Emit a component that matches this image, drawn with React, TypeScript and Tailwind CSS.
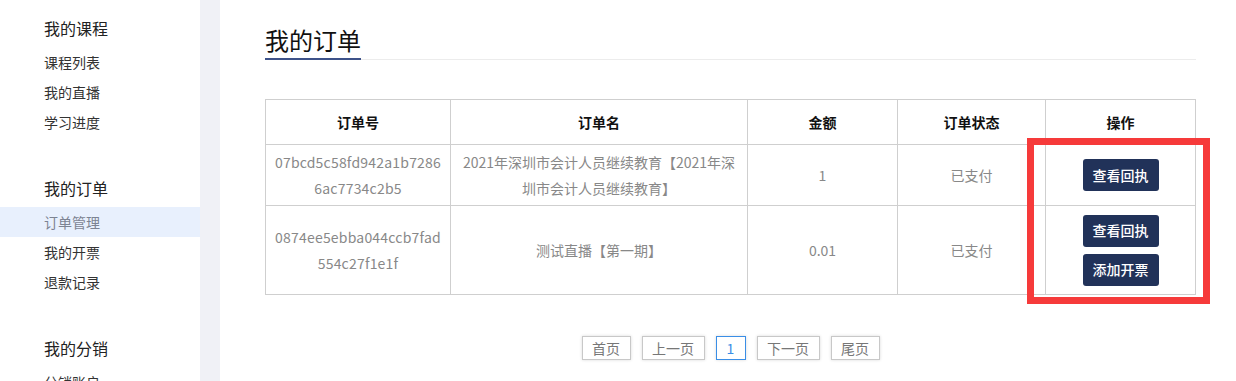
const font = "font-['Microsoft_YaHei','Noto_Sans_CJK_SC',sans-serif]";

const menu = [
  { title: "我的课程", items: ["课程列表", "我的直播", "学习进度"] },
  { title: "我的订单", items: ["订单管理", "我的开票", "退款记录"] },
  { title: "我的分销", items: ["分销账户"] },
];

const orders = [
  {
    no: ["07bcd5c58fd942a1b7286", "6ac7734c2b5"],
    name: "2021年深圳市会计人员继续教育【2021年深圳市会计人员继续教育】",
    amount: "1",
    status: "已支付",
    actions: ["查看回执"],
  },
  {
    no: ["0874ee5ebba044ccb7fad", "554c27f1e1f"],
    name: "测试直播【第一期】",
    amount: "0.01",
    status: "已支付",
    actions: ["查看回执", "添加开票"],
  },
];

function Sidebar() {
  return (
    <aside className="w-[200px] shrink-0 bg-white pt-[13px]">
      {menu.map((sec, i) => (
        <div key={sec.title} className={i > 0 ? "mt-[36px]" : ""}>
          <div className="mb-[4px] h-[30px] pl-[44px] text-[16px] leading-[30px] text-[#222]">{sec.title}</div>
          {sec.items.map((it) => (
            <div
              key={it}
              className={`h-[30px] pl-[44px] text-[14px] leading-[30px] ${it === "订单管理" ? "bg-[#e8f0fd] text-[#7c8392]" : "text-[#333]"}`}
            >
              {it}
            </div>
          ))}
        </div>
      ))}
    </aside>
  );
}

function Pager() {
  const pages = [
    { label: "首页", w: "w-[49px]" },
    { label: "上一页", w: "w-[63px]" },
    { label: "1", w: "w-[30px]", active: true },
    { label: "下一页", w: "w-[63px]" },
    { label: "尾页", w: "w-[49px]" },
  ];
  return (
    <div className="mt-[41px] flex justify-center gap-[11px]">
      {pages.map((p) => (
        <span
          key={p.label}
          className={`flex h-[24px] ${p.w} items-center justify-center border text-[14px] shadow-[0_0_3px_rgba(0,0,0,0.15)] ${p.active ? "border-[#3a8ee6] text-[#3a8ee6]" : "border-[#c8c8c8] text-[#777]"}`}
        >
          {p.label}
        </span>
      ))}
    </div>
  );
}

export default function App() {
  return (
    <div className={`flex h-[381px] w-[1236px] overflow-hidden bg-white ${font}`}>
      <Sidebar />
      <div className="w-[20px] shrink-0 bg-[#f0f1f6]" />
      <main className="flex-1 pl-[45px] pr-[41px] pt-[24px]">
        <div className="flex items-end border-b border-[#ececec]">
          <h1 className="-mb-px border-b-2 border-[#3d5289] pb-[2px] text-[24px] leading-[32px] text-[#111]">我的订单</h1>
        </div>

        <div className="relative mt-[39px]">
          <table className="w-[930px] table-fixed border-collapse text-center text-[14px]">
            <colgroup>
              <col className="w-[185px]" />
              <col className="w-[297px]" />
              <col className="w-[150px]" />
              <col className="w-[148px]" />
              <col className="w-[150px]" />
            </colgroup>
            <thead>
              <tr className="h-[45px]">
                {["订单号", "订单名", "金额", "订单状态", "操作"].map((h) => (
                  <th key={h} className="border border-[#cfcfcf] font-bold text-[#111]">{h}</th>
                ))}
              </tr>
            </thead>
            <tbody className="text-[#888]">
              {orders.map((o) => (
                <tr key={o.no[0]}>
                  <td className="border border-[#cfcfcf] px-[4px] py-[4px] leading-[26px] tracking-[0.2px]">
                    {o.no.map((l) => (
                      <div key={l}>{l}</div>
                    ))}
                  </td>
                  <td className="border border-[#cfcfcf] px-[8px] py-[4px] leading-[26px]">{o.name}</td>
                  <td className="border border-[#cfcfcf] leading-[26px]">{o.amount}</td>
                  <td className="border border-[#cfcfcf] leading-[26px]">{o.status}</td>
                  <td className="border border-[#cfcfcf] py-[4px]">
                    <div className="flex flex-col items-center gap-[7px] py-[4.5px]">
                      {o.actions.map((a) => (
                        <button
                          key={a}
                          className="h-[32px] w-[76px] rounded-[3px] bg-[#213259] text-[14px] font-medium text-white"
                        >
                          {a}
                        </button>
                      ))}
                    </div>
                  </td>
                </tr>
              ))}
            </tbody>
          </table>
          <div className="pointer-events-none absolute left-[762px] top-[39px] h-[166px] w-[183px] border-[7px] border-[#f63a3a]" />
        </div>

        <Pager />
      </main>
    </div>
  );
}
